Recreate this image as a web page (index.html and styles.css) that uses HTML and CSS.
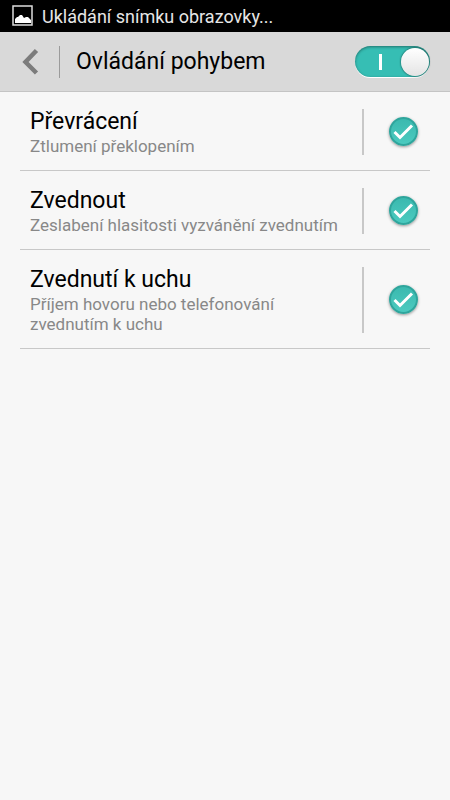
FILE: index.html
```html
<!DOCTYPE html>
<html lang="cs">
<head>
  <meta charset="UTF-8">
  <meta name="viewport" content="width=device-width, initial-scale=1">
  <title>Ovládání pohybem</title>
  <link rel="stylesheet" href="styles.css">
</head>
<body>

  <!-- Status bar -->
  <div class="status-bar">
    <svg class="status-icon" width="22" height="22" viewBox="0 0 22 22" aria-hidden="true">
      <rect x="1" y="1" width="19" height="19" fill="none" stroke="#ddd" stroke-width="1.5"/>
      <path d="M3 18v-4l2-2h1l2-2h2l2 3 2-1h2l3 3v3z" fill="#fff"/>
    </svg>
    <span>Ukládání snímku obrazovky...</span>
  </div>

  <!-- Header -->
  <header class="header">
    <button type="button" class="back" aria-label="Zpět">
      <svg width="17" height="28" viewBox="0 0 17 28">
        <path d="M14.500 2.500L3.500 14L14.500 25" fill="none" stroke="#7c7c7c" stroke-width="4.500"/>
      </svg>
    </button>
    <h1>Ovládání pohybem</h1>
    <input type="checkbox" class="switch" aria-label="Ovládání pohybem" checked>
  </header>

  <!-- Motion settings -->
  <main class="list">
    <label class="row">
      <span class="text">
        <span class="title">Převrácení</span>
        <span class="desc">Ztlumení překlopením</span>
      </span>
      <span class="check">
        <input type="checkbox" checked>
        <svg viewBox="0 0 29 29" aria-hidden="true"><path d="M5.500 15L11 20.500L23 8.500"/></svg>
      </span>
    </label>

    <label class="row">
      <span class="text">
        <span class="title">Zvednout</span>
        <span class="desc">Zeslabení hlasitosti vyzvánění zvednutím</span>
      </span>
      <span class="check">
        <input type="checkbox" checked>
        <svg viewBox="0 0 29 29" aria-hidden="true"><path d="M5.500 15L11 20.500L23 8.500"/></svg>
      </span>
    </label>

    <label class="row">
      <span class="text">
        <span class="title">Zvednutí k uchu</span>
        <span class="desc">Příjem hovoru nebo telefonování zvednutím k uchu</span>
      </span>
      <span class="check">
        <input type="checkbox" checked>
        <svg viewBox="0 0 29 29" aria-hidden="true"><path d="M5.500 15L11 20.500L23 8.500"/></svg>
      </span>
    </label>
  </main>

</body>
</html>
```

FILE: styles.css
```css
* {
  box-sizing: border-box;
}

body {
  font-family: Roboto, "Liberation Sans", sans-serif;
  background: #f7f7f7;
  color: #000;
  margin: 0;
}

.status-bar {
  display: flex;
  align-items: center;
  gap: 8px;
  height: 32px;
  padding: 0 12px;
  background: #000;
  color: #e6e6e6;
  font-size: 18px;
}

.header {
  display: flex;
  align-items: center;
  height: 60px;
  padding: 0 20px;
  background: #d9d9d9;
  border-bottom: 1px solid #c4c4c4;
}

.header h1 {
  flex: 1;
  margin: 0;
  padding-left: 16px;
  font-size: 23px;
  font-weight: 400;
}

.back {
  display: flex;
  align-items: center;
  width: 40px;
  height: 32px;
  padding: 0 0 0 2px;
  background: none;
  border: none;
  border-right: 1px solid #9b9b9b;
  cursor: pointer;
}

.switch {
  appearance: none;
  display: flex;
  align-items: center;
  justify-content: flex-end;
  gap: 19px;
  width: 75px;
  height: 31px;
  margin: 0;
  border-radius: 16px;
  background: #aaa;
  box-shadow: inset 0 1px 3px rgba(0,0,0,0.4), 0 1px 0 #fff;
  cursor: pointer;
}

.switch:checked {
  background: #36beb4;
}

.switch::before {
  content: "";
  width: 3px;
  height: 16px;
  background: #fff;
}

.switch::after {
  content: "";
  width: 28px;
  height: 28px;
  margin-right: 1px;
  border-radius: 50%;
  background: linear-gradient(#fff, #e4e4e4);
  box-shadow: 0 0 2px rgba(0,0,0,0.8);
}

.switch:not(:checked) {
  flex-direction: row-reverse;
}

.list {
  padding: 0 20px;
}

.row {
  display: flex;
  padding: 16px 0 14px;
  border-bottom: 1px solid #c8c8c8;
  cursor: pointer;
}

.text {
  flex: 1;
  padding: 0 20px 0 10px;
}

.title,
.desc {
  display: block;
}

.title {
  font-size: 23px;
  line-height: 28px;
}

.desc {
  color: #888;
  font-size: 17px;
  line-height: 20px;
}

.check {
  display: grid;
  place-items: center;
  width: 68px;
  margin: 1px 0;
  padding: 0 12px 2px 24px;
  border-left: 2px solid #c8c8c8;
}

.check input,
.check svg {
  grid-area: 1 / 1;
  width: 29px;
  height: 29px;
}

.check input {
  appearance: none;
  margin: 0;
  border: 2px solid #aaa;
  border-radius: 50%;
}

.check input:checked {
  background: linear-gradient(#3bb9af, #4bcabf);
  border-color: #2fa59c;
  box-shadow: 0 1px 3px rgba(0,0,0,0.4);
}

.check svg {
  z-index: 1;
  fill: none;
  stroke: #fff;
  stroke-width: 3;
  visibility: hidden;
  pointer-events: none;
}

.check input:checked + svg {
  visibility: visible;
}
```
